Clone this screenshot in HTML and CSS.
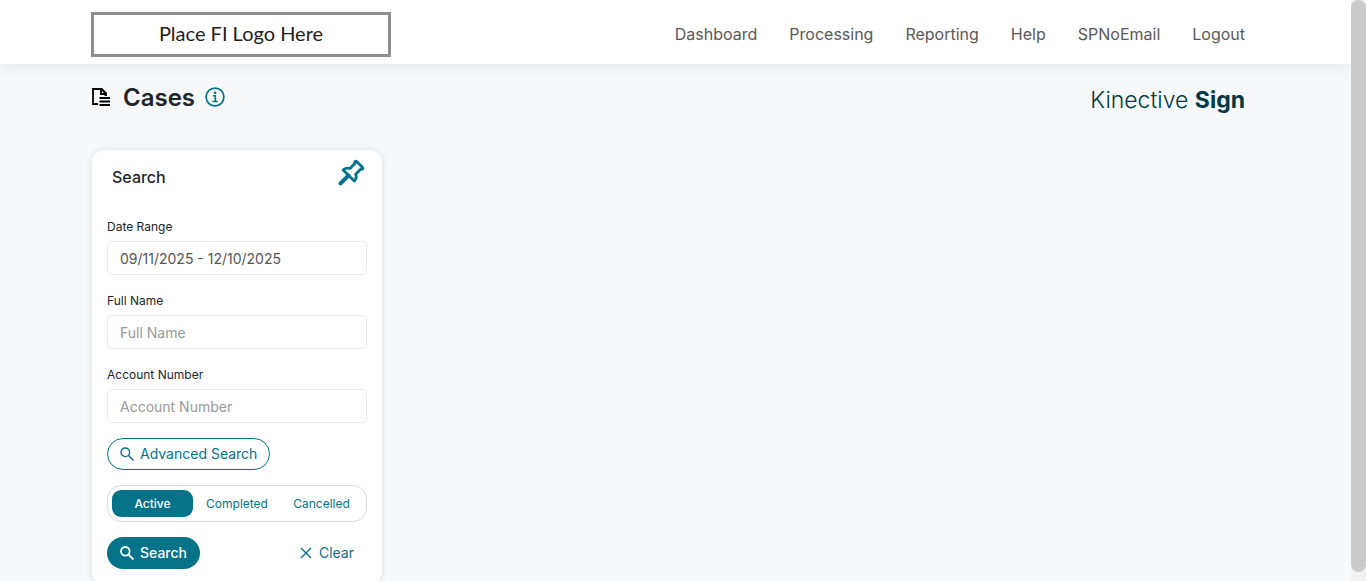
FILE: index.html
```html
<!DOCTYPE html>
<html lang="en">
<head>
<meta charset="utf-8">
<meta name="viewport" content="width=device-width, initial-scale=1">
<title>Cases</title>
<link rel="stylesheet" href="styles.css">
</head>
<body>
<div class="page">
  <header class="topbar">
    <div class="container topbar-row">
      <a class="fi-logo" href="#">Place FI Logo Here</a>
      <nav class="nav">
        <a href="#">Dashboard</a>
        <a href="#">Processing</a>
        <a href="#">Reporting</a>
        <a href="#">Help</a>
        <a href="#">SPNoEmail</a>
        <a href="#">Logout</a>
      </nav>
    </div>
  </header>
  <main class="container">
    <div class="heading">
      <svg class="cases-icon" viewBox="0 0 20 20" aria-hidden="true">
        <path d="M7 17H2V2h8l4.500 4.500V9" fill="none" stroke="#000" stroke-width="1.800"/>
        <path d="M9 1h2l5 5v3h-2V8H9z" fill="#000"/>
        <path d="M11 4v2h2z" fill="#f6f8fa"/>
        <path d="M8.500 11H19M8.500 14.500H19M8.500 18H19" stroke="#000" stroke-width="1.800"/>
      </svg>
      <h1>Cases</h1>
      <button class="info" type="button" aria-label="About cases">
        <svg viewBox="0 0 20 20" aria-hidden="true">
          <circle cx="10" cy="10" r="8.900" fill="none" stroke="currentColor" stroke-width="1.700"/>
          <circle cx="10" cy="5.800" r="1.400" fill="currentColor"/>
          <path d="M7.800 8.800h2.500V14M7.500 14.500h5.200" fill="none" stroke="currentColor" stroke-width="1.600"/>
        </svg>
      </button>
      <div class="brand">Kinective <strong>Sign</strong></div>
    </div>
    <form class="card">
      <div class="card-head">
        <h2>Search</h2>
        <button class="pin" type="button" aria-label="Pin search">
          <svg viewBox="0 0 26 26" aria-hidden="true">
            <path d="M18 2.500 23.500 8C24.500 9.200 23.500 10.200 21.800 9.800L17 14.600C18 17 17.300 19.500 15.800 21.300L5 10.500C6.800 9 9.300 8.300 11.500 9.200L16.200 4.400C15.800 2.500 16.800 1.500 18 2.500Z" fill="none" stroke="currentColor" stroke-width="2.700" stroke-linejoin="round"/>
            <path d="M10 16 2.500 23.500" stroke="currentColor" stroke-width="4" stroke-linecap="round"/>
          </svg>
        </button>
      </div>
      <div class="field">
        <label for="range">Date Range</label>
        <input id="range" type="text" value="09/11/2025 - 12/10/2025">
      </div>
      <div class="field">
        <label for="name">Full Name</label>
        <input id="name" type="text" placeholder="Full Name">
      </div>
      <div class="field">
        <label for="account">Account Number</label>
        <input id="account" type="text" placeholder="Account Number">
      </div>
      <button class="btn outline" type="button">
        <svg viewBox="0 0 14 14" aria-hidden="true"><circle cx="5.300" cy="5.300" r="4.300"/><path d="m8.500 8.500 5 5"/></svg>
        Advanced Search
      </button>
      <div class="tabs">
        <button class="tab active" type="button">Active</button>
        <button class="tab" type="button">Completed</button>
        <button class="tab" type="button">Cancelled</button>
      </div>
      <div class="actions">
        <button class="btn solid" type="submit">
          <svg viewBox="0 0 14 14" aria-hidden="true"><circle cx="5.300" cy="5.300" r="4.300"/><path d="m8.500 8.500 5 5"/></svg>
          Search
        </button>
        <button class="btn clear" type="reset">
          <svg viewBox="0 0 14 14" aria-hidden="true"><path d="m2 2 10 10M12 2 2 12"/></svg>
          Clear
        </button>
      </div>
    </form>
  </main>
</div>
<div class="scrollbar"><div class="thumb"></div></div>
</body>
</html>
```
FILE: styles.css
```css
* { box-sizing: border-box; }
body {
  margin: 0;
  display: flex;
  height: 100vh;
  overflow: hidden;
  background: #f6f8fa;
  color: #212529;
  font-family: Inter, "Liberation Sans", sans-serif;
  font-size: 14px;
}
button, input { font: inherit; }
button { border: 0; background: none; padding: 0; color: #047288; cursor: pointer; }
svg { display: block; }
.page { flex: 1; min-width: 0; overflow: hidden; }
.topbar { background: #fff; box-shadow: 0 0 16px rgba(4, 50, 70, .1); padding: 12px 0 7px; }
.container { margin: 0 91px; }
.topbar-row { display: flex; align-items: center; justify-content: space-between; }
.fi-logo {
  width: 300px;
  padding-bottom: 2px;
  border: 3px solid #8f8f8f;
  font-family: Lato, sans-serif;
  font-size: 20px;
  line-height: 37px;
  text-align: center;
  color: #212121;
  text-decoration: none;
}
.nav { display: flex; gap: 32px; padding: 0 15px 2px 0; }
.nav a { font-size: 16px; line-height: 24px; color: #595959; text-decoration: none; }
.heading { display: flex; align-items: center; height: 66px; padding-right: 15px; }
.cases-icon { width: 20px; height: 20px; }
.heading h1 { margin: 0 10px 0 12px; padding-top: 2px; font-size: 24px; line-height: 32px; font-weight: 600; }
.info svg { width: 20px; height: 20px; }
.brand { margin-left: auto; padding-top: 6px; font-size: 23px; line-height: 32px; font-weight: 300; color: #003a45; }
.brand strong { font-weight: 700; }
.card {
  width: 290px;
  margin: 20px 0 0 1px;
  padding: 9px 15px 15px;
  border-radius: 12px;
  background: #fff;
  box-shadow: 0 0 6px rgba(20, 40, 60, .12);
}
.card-head { display: flex; justify-content: space-between; align-items: flex-start; height: 57px; padding: 0 2px 0 5px; }
.card-head h2 { margin: 6px 0 0; font-size: 16px; line-height: 24px; font-weight: 500; }
.pin svg { width: 27px; height: 27px; }
.field { margin-bottom: 15px; }
.field label { display: block; margin-bottom: 3px; font-size: 12px; line-height: 22px; }
.field input {
  display: block;
  width: 100%;
  height: 34px;
  padding: 1px 12px 0;
  border: 1px solid #e9e9eb;
  border-radius: 5px;
  background: #fff;
  color: #555;
}
.field input::placeholder { color: #999; opacity: 1; }
.btn { display: inline-flex; align-items: center; gap: 6px; height: 32px; padding: 0 12px 1px; border: 1px solid transparent; border-radius: 16px; }
.btn svg { width: 14px; height: 14px; fill: none; stroke: currentColor; stroke-width: 1.4; }
.outline { border-color: #047288; }
.solid { background: #047288; color: #fff; font-weight: 500; }
.solid svg { stroke-width: 1.8; }
.tabs { display: grid; grid-template-columns: 81fr 88fr 81fr; margin: 15px 0; padding: 4px; border: 1px solid #d9d9e3; border-radius: 14px; }
.tab { height: 27px; padding-bottom: 1px; border-radius: 9px; font-size: 12px; }
.tab.active { background: #047288; color: #fff; font-weight: 500; }
.actions { display: flex; justify-content: space-between; }
.scrollbar { width: 15px; padding-bottom: 9px; background: #f1f1f1; }
.thumb { height: 100%; border-radius: 8px; background: #cbcbcb; }
```
